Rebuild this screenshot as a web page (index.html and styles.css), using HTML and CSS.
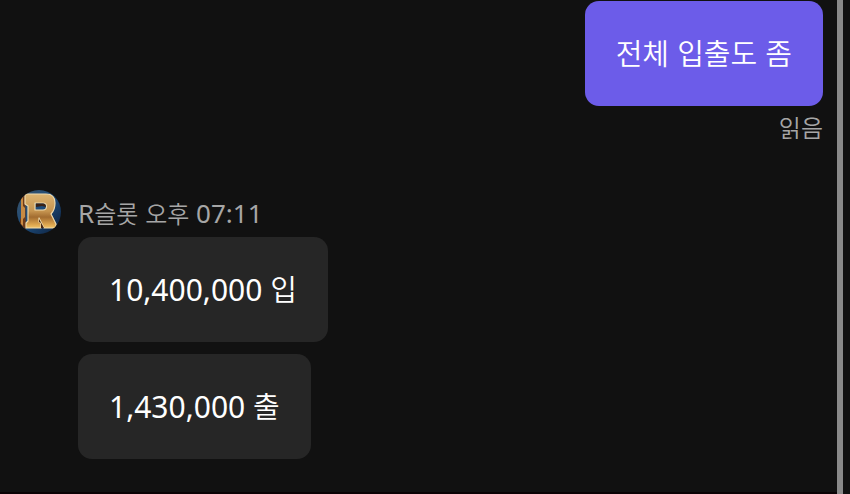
FILE: index.html
```html
<!DOCTYPE html>
<html lang="ko">
<head>
    <meta charset="UTF-8">
    <meta name="viewport" content="width=device-width, initial-scale=1.0">
    <title>R슬롯</title>
    <link rel="stylesheet" href="styles.css">
</head>
<body>
    <div class="chat">
        <main class="messages">
            <!-- Sent -->
            <div class="sent">
                <p class="bubble"><span class="ko">전체 입출도 좀</span></p>
                <p class="status"><span class="ko">읽음</span></p>
            </div>

            <!-- Received -->
            <div class="received">
                <svg class="avatar" viewBox="0 0 44 44" role="img" aria-label="R슬롯">
                    <defs>
                        <clipPath id="round"><circle cx="22" cy="22" r="22"/></clipPath>
                        <linearGradient id="sky" x1="0" y1="0" x2="1" y2="1">
                            <stop offset="0" stop-color="#3c5366"/>
                            <stop offset="0.5" stop-color="#1d4c7c"/>
                            <stop offset="1" stop-color="#0c1d38"/>
                        </linearGradient>
                        <linearGradient id="gold" x1="0" y1="0" x2="0" y2="1">
                            <stop offset="0" stop-color="#dcb472"/>
                            <stop offset="0.5" stop-color="#c69550"/>
                            <stop offset="0.68" stop-color="#a26c30"/>
                            <stop offset="0.9" stop-color="#dda64f"/>
                            <stop offset="1" stop-color="#f0c468"/>
                        </linearGradient>
                    </defs>
                    <g clip-path="url(#round)">
                        <rect width="44" height="44" fill="url(#sky)"/>
                        <path d="M8 3 L4 6 V16 L6 18 V26 L3 29 V36 L9 39 Z" fill="#6d3a18"/>
                        <path d="M4 8 L6 6 V16 L8 18 V27 L6 29 V36 L4 34 Z" fill="#c98a42"/>
                        <path fill-rule="evenodd" d="M8 4 H29 Q38 4 38 13 Q38 20 34 24 L39 34 V38 H27 L22 28 V32 L24 33 V38 H9 V33 L11 31 V16 L8 14 Z M18 13 V20 H26 Q29.500 20 29.500 16.500 Q29.500 13 26 13 Z" fill="url(#gold)" stroke="#efd9ab" stroke-width="1.200" stroke-linejoin="round"/>
                        <path d="M19 13.500 H26 Q29 13.500 29 17 L25 16 L19 17 Z" fill="#3a2216"/>
                        <path d="M22 29 L27 38 H24 V33 L22 32 Z" fill="#4a2812"/>
                    </g>
                </svg>
                <div class="thread">
                    <p class="sender">R<span class="ko">슬롯</span> <span class="ko">오후</span> 07:11</p>
                    <p class="bubble">10,400,000 <span class="ko">입</span></p>
                    <p class="bubble">1,430,000 <span class="ko">출</span></p>
                </div>
            </div>
        </main>
        <div class="scrollbar"></div>
    </div>
</body>
</html>
```

FILE: styles.css
```css
body {
    margin: 0;
    background: #111111;
    color: #ffffff;
    font-family: "Noto Sans", "Noto Sans CJK KR", sans-serif;
}

p {
    margin: 0;
}

.chat {
    display: flex;
    min-height: 100vh;
    box-sizing: border-box;
    padding-right: 7px;
}

.messages {
    flex: 1;
    padding: 1px 14px 0 17px;
    border-bottom: 2px solid #0a0205;
}

.scrollbar {
    width: 6px;
    background: #8a8a8a;
}

.bubble {
    padding: 30px 31px;
    border-radius: 14px;
    background: #262626;
    font-size: 30px;
    line-height: 45px;
}

.ko {
    font-family: "Noto Sans CJK KR", sans-serif;
    font-weight: 350;
    line-height: 1;
}

.bubble .ko {
    font-size: 29px;
}

.sent {
    display: flex;
    flex-direction: column;
    align-items: flex-end;
}

.sent .bubble {
    background: #6c5ce9;
}

.status,
.sender {
    color: #a6a6a6;
    font-size: 26px;
    line-height: 42px;
}

.status .ko,
.sender .ko {
    font-size: 24px;
}

.received {
    display: flex;
    align-items: flex-start;
    gap: 17px;
    margin-top: 42px;
}

.avatar {
    width: 44px;
    height: 44px;
}

.thread {
    display: flex;
    flex-direction: column;
    align-items: flex-start;
}

.sender {
    padding: 2px 0 3px;
}

.bubble + .bubble {
    margin-top: 12px;
}
```
